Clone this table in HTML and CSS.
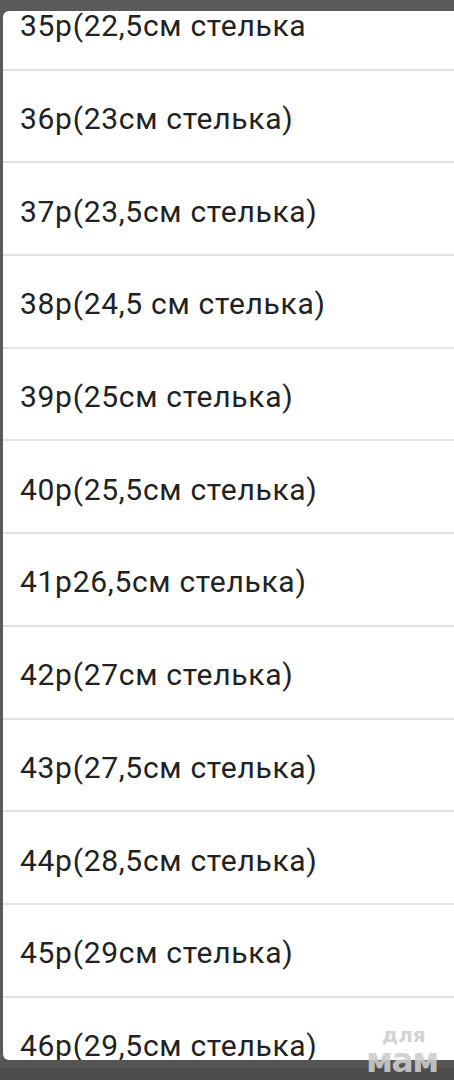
FILE: index.html
```html
<!DOCTYPE html>
<html lang="ru">
<head>
<meta charset="utf-8">
<link rel="stylesheet" href="styles.css">
</head>
<body>
<div class="screen">
  <div class="panel">
    <ul class="list">
      <li class="row">35р(22,5см стелька</li>
      <li class="row">36р(23см стелька)</li>
      <li class="row">37р(23,5см стелька)</li>
      <li class="row">38р(24,5 см стелька)</li>
      <li class="row">39р(25см стелька)</li>
      <li class="row">40р(25,5см стелька)</li>
      <li class="row">41р26,5см стелька)</li>
      <li class="row">42р(27см стелька)</li>
      <li class="row">43р(27,5см стелька)</li>
      <li class="row">44р(28,5см стелька)</li>
      <li class="row">45р(29см стелька)</li>
      <li class="row">46р(29,5см стелька)</li>
    </ul>
  </div>
  <div class="bottom"></div>
  <div class="watermark"><span class="wm-small">для</span><span class="wm-big">мам</span></div>
</div>
</body>
</html>
```
FILE: styles.css
```css
html, body {
  margin: 0;
  padding: 0;
  background: #5a5a5a;
}
.screen {
  position: relative;
  width: 454px;
  height: 1080px;
  overflow: hidden;
  background: #5a5a5a;
  padding-top: 11px;
  box-sizing: border-box;
}
.panel {
  margin-left: 3px;
  height: 1049px;
  background: #ffffff;
  border-radius: 6px 0 0 6px;
  overflow: hidden;
}
.list {
  list-style: none;
  margin: -33px 0 0 0;
  padding: 0;
}
.row {
  height: 92.7px;
  box-sizing: border-box;
  border-bottom: 2px solid #e2e2e2;
  padding-left: 17px;
  display: flex;
  align-items: center;
  font-family: Roboto, "Noto Sans", sans-serif;
  font-size: 30px;
  letter-spacing: 0.7px;
  color: #222222;
  padding-top: 5px;
}
.bottom {
  height: 20px;
  border-top: 8px solid #555555;
  background: #4d4d4d;
}
.watermark {
  position: absolute;
  left: 366px;
  top: 1026px;
  display: flex;
  flex-direction: column;
  align-items: center;
  font-family: "DejaVu Sans", sans-serif;
  font-weight: bold;
  color: rgba(205, 205, 205, 0.9);
  line-height: 0.95;
}
.wm-small {
  font-size: 20px;
  margin-left: 4px;
}
.wm-big {
  font-size: 33px;
  letter-spacing: -1.5px;
}
```
